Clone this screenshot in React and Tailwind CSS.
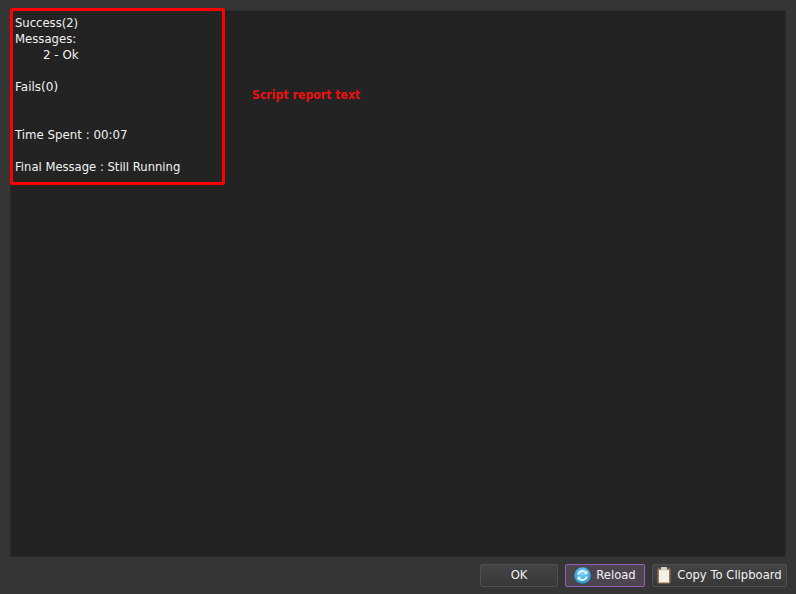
const ui = { fontFamily: '"DejaVu Sans", sans-serif' };

function ReloadIcon() {
  return (
    <svg width="17" height="17" viewBox="0 0 16 16" className="shrink-0">
      <defs>
        <radialGradient id="rg" cx="50%" cy="35%" r="70%">
          <stop offset="0%" stopColor="#7fd4f7" />
          <stop offset="100%" stopColor="#1f8fd0" />
        </radialGradient>
      </defs>
      <circle cx="8" cy="8" r="7.8" fill="url(#rg)" />
      <path d="M4 7.2A4.2 4.2 0 0 1 11.2 5" fill="none" stroke="#eaf8ff" strokeWidth="1.6" />
      <path d="M12.6 3.4v3.4H9.2z" fill="#eaf8ff" />
      <path d="M12 8.8A4.2 4.2 0 0 1 4.8 11" fill="none" stroke="#eaf8ff" strokeWidth="1.6" />
      <path d="M3.4 12.6V9.2h3.4z" fill="#eaf8ff" />
    </svg>
  );
}

function ClipboardIcon() {
  return (
    <svg width="14" height="17" viewBox="0 0 14 17" className="shrink-0">
      <rect x="0.5" y="1.5" width="13" height="15" rx="1" fill="#9a7850" />
      <rect x="2" y="3" width="10" height="12.5" fill="#f1efe6" />
      <rect x="4" y="0" width="6" height="3.5" rx="0.5" fill="#d2d2ca" />
    </svg>
  );
}

const lines = [
  { t: 'Success(2)', c: 'text-[11.6px]' },
  { t: 'Messages:', c: 'text-[11.7px]' },
  { t: '2 - Ok', c: 'pl-[28px] text-[11.9px]' },
  { t: '', c: '' },
  { t: 'Fails(0)', c: 'text-[12px]' },
  { t: '', c: '' },
  { t: '', c: '' },
  { t: 'Time Spent : 00:07', c: 'text-[11.8px]' },
  { t: '', c: '' },
  { t: 'Final Message : Still Running', c: 'text-[11.6px]' },
];

export default function App() {
  return (
    <div className="relative flex h-[594px] w-[796px] flex-col overflow-hidden bg-[#353535] text-white" style={ui}>
      <div className="mx-[10px] mt-[10px] h-[547px] border border-[#2b2b2b] bg-[#232323] px-1 pt-1 leading-[16px] text-[#f2f2f2]">
        {lines.map((l, i) => (
          <div key={i} className={`h-4 whitespace-pre ${l.c}`}>{l.t}</div>
        ))}
      </div>
      <div className="mt-[7px] flex items-start justify-end gap-[7px] pr-[9px] text-[11.6px]">
        <button className="flex h-[23px] w-[78px] items-center justify-center rounded-[2px] border border-[#505050] bg-gradient-to-b from-[#444444] to-[#383838] text-[#f2f2f2]">OK</button>
        <button className="flex h-[23px] w-[80px] items-center justify-center gap-[5px] rounded-[2px] border border-[#9262b8] bg-[#4c4550] text-[#f2f2f2]">
          <ReloadIcon />
          <span>Reload</span>
        </button>
        <button className="flex h-[23px] w-[135px] items-center justify-center gap-[6px] rounded-[2px] border border-[#505050] bg-gradient-to-b from-[#444444] to-[#383838] text-[#f2f2f2]">
          <ClipboardIcon />
          <span>Copy To Clipboard</span>
        </button>
      </div>
      <div className="pointer-events-none absolute left-[10px] top-[8px] h-[177px] w-[215px] rounded-[2px] border-[3px] border-[#ff0000]" />
      <div className="absolute left-[252px] top-[87px] text-[12px] font-bold leading-[16px] tracking-[0.1px] text-[#f01010]" style={{ fontFamily: '"DejaVu Sans Condensed", "Liberation Sans Narrow", sans-serif' }}>Script report text</div>
    </div>
  );
}
